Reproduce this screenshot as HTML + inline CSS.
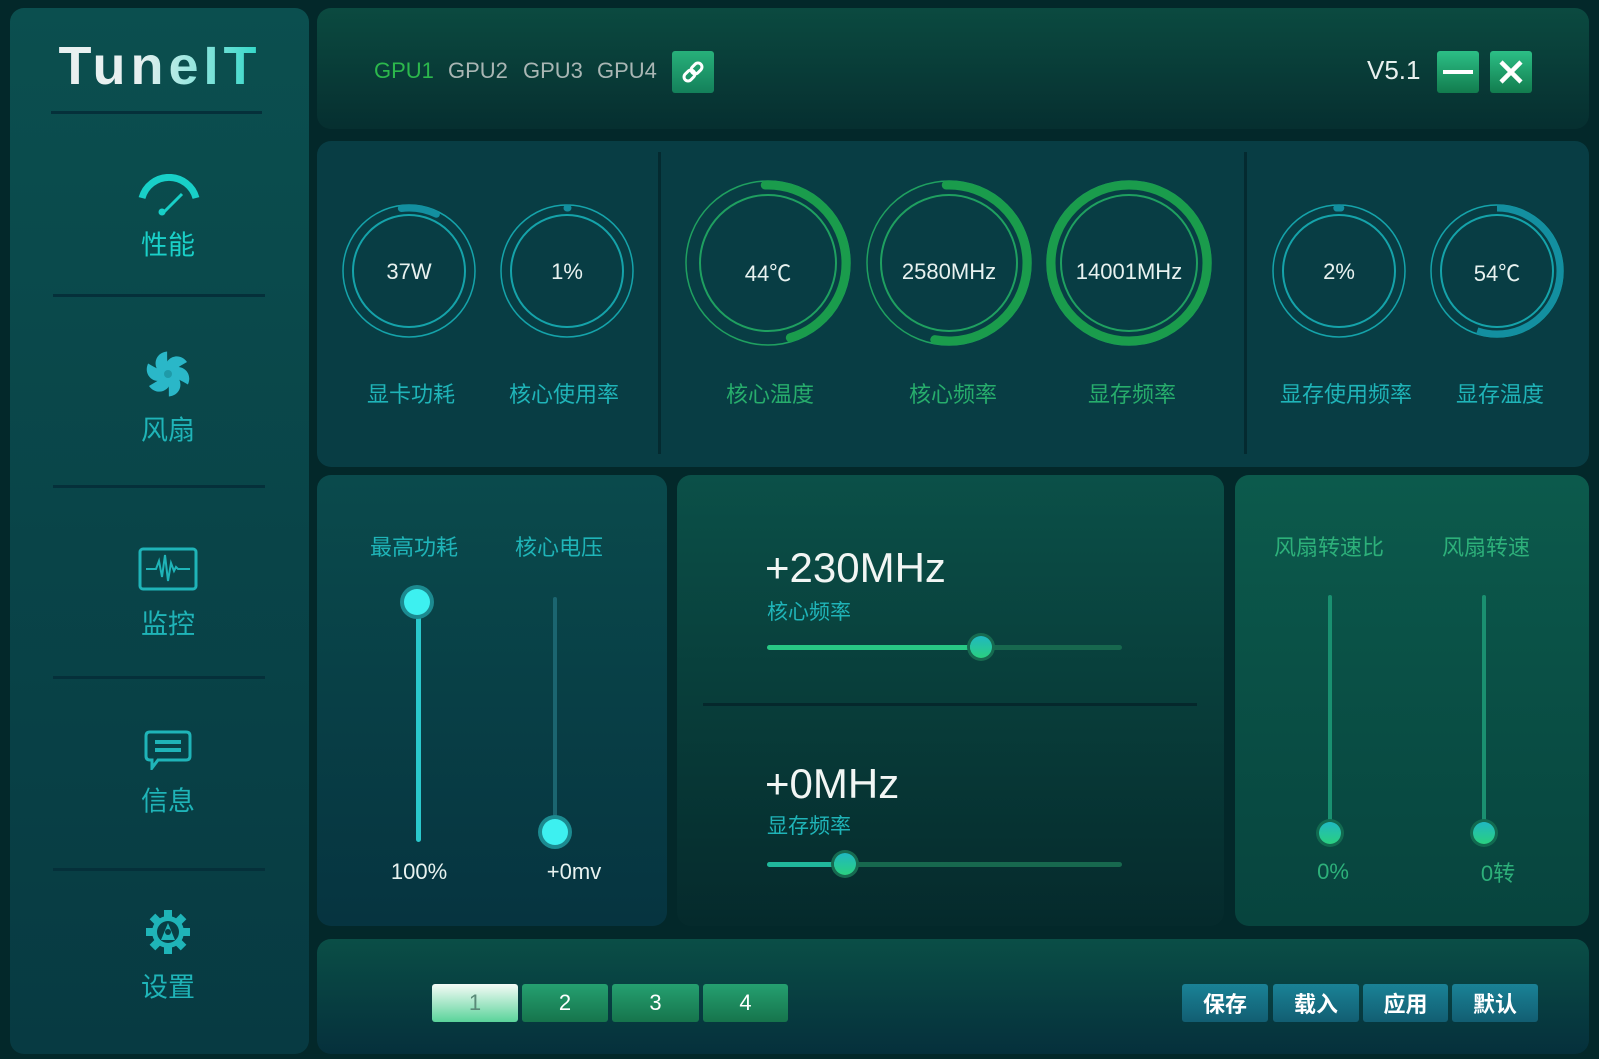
<!DOCTYPE html>
<html><head><meta charset="utf-8"><style>
*{margin:0;padding:0;box-sizing:border-box}
body{width:1599px;height:1059px;background:#03282a;position:relative;overflow:hidden;font-family:"Liberation Sans","Noto Sans CJK SC",sans-serif}
.a{position:absolute}
.p{position:absolute;border-radius:14px}
.t{position:absolute;white-space:nowrap;transform:translate(-50%,-50%)}
.sep{position:absolute;height:3px;background:#05303a;left:53px;width:212px}
.lbl{color:#1fb4b8;font-size:22px}
.lblg{color:#27ad6c;font-size:22px}
.val{color:#e8f2f0;font-size:22px}
.btn{position:absolute;top:984px;height:38px;border-radius:3px;color:#fff;font-size:22px;display:flex;align-items:center;justify-content:center}
.nb{background:linear-gradient(#25a070,#16744c)}
.rb{background:linear-gradient(#1a8296,#125e72);font-weight:bold}
</style></head><body>
<div class="p" style="left:10px;top:8px;width:299px;height:1046px;background:linear-gradient(#0b4f4f,#073a42)"></div>
<div class="t" style="left:160px;top:66px;font-size:54px;font-weight:bold;letter-spacing:5px;background:linear-gradient(90deg,#e8f0f0 40%,#2fd8c8);-webkit-background-clip:text;color:transparent">TuneIT</div>
<div class="sep" style="top:111px;left:51px;width:211px"></div>
<svg class="a" style="left:138px;top:174px" width="62" height="42" viewBox="0 0 62 42"><path d="M4 24 A28 28 0 0 1 58 24" fill="none" stroke="#18d0c8" stroke-width="7"/><path d="M24 40 L44 20" stroke="#18d0c8" stroke-width="3"/><circle cx="24" cy="38" r="3.5" fill="#18d0c8"/></svg>
<div class="t" style="left:168px;top:243px;color:#1ad0c8;font-size:27px">性能</div>
<div class="sep" style="top:294px"></div>
<svg class="a" style="left:145px;top:351px" width="46" height="46" viewBox="-23 -23 46 46"><g fill="#2ab7c8"><path id="b" d="M-3 -6 C-2 -18 12 -22 19 -12 C14 -9 8 -6 5 -2Z"/><use href="#b" transform="rotate(60)"/><use href="#b" transform="rotate(120)"/><use href="#b" transform="rotate(180)"/><use href="#b" transform="rotate(240)"/><use href="#b" transform="rotate(300)"/><circle r="7"/></g><circle r="4" fill="#1f9aa8"/></svg>
<div class="t" style="left:168px;top:428px;color:#1fb4b8;font-size:27px">风扇</div>
<div class="sep" style="top:485px"></div>
<svg class="a" style="left:138px;top:547px" width="60" height="44" viewBox="0 0 60 44"><rect x="2" y="2" width="56" height="40" rx="3" fill="none" stroke="#1fb4b8" stroke-width="3"/><path d="M8 22 H18 L21 14 L24 30 L27 8 L30 34 L33 16 L36 24 L38 20 L40 22 H52" fill="none" stroke="#1fb4b8" stroke-width="2"/></svg>
<div class="t" style="left:168px;top:622px;color:#1fb4b8;font-size:27px">监控</div>
<div class="sep" style="top:676px"></div>
<svg class="a" style="left:144px;top:730px" width="48" height="40" viewBox="0 0 48 40"><path d="M6 2 H42 Q46 2 46 6 V26 Q46 30 42 30 H14 L8 38 V30 H6 Q2 30 2 26 V6 Q2 2 6 2Z" fill="none" stroke="#1fb4b8" stroke-width="3"/><path d="M11 12 H37 M11 20 H37" stroke="#1fb4b8" stroke-width="4"/></svg>
<div class="t" style="left:168px;top:799px;color:#1fb4b8;font-size:27px">信息</div>
<div class="sep" style="top:868px"></div>
<svg class="a" style="left:145px;top:909px" width="46" height="46" viewBox="-23 -23 46 46"><g fill="#1fb4b8"><circle r="16"/><g id="tt"><rect x="-4" y="-22" width="8" height="8"/></g><use href="#tt" transform="rotate(45)"/><use href="#tt" transform="rotate(90)"/><use href="#tt" transform="rotate(135)"/><use href="#tt" transform="rotate(180)"/><use href="#tt" transform="rotate(225)"/><use href="#tt" transform="rotate(270)"/><use href="#tt" transform="rotate(315)"/></g><circle r="11" fill="#083f45"/><path d="M0 -9 L-7 8 H7Z" fill="#1fb4b8"/><circle r="3" fill="#083f45"/></svg>
<div class="t" style="left:168px;top:985px;color:#1fb4b8;font-size:27px">设置</div>

<div class="p" style="left:317px;top:8px;width:1272px;height:121px;background:linear-gradient(#0b4a40,#062f30)"></div>
<div class="a" style="left:374px;top:58px;font-size:22px;color:#2cb84c">GPU1</div>
<div class="a" style="left:448px;top:58px;font-size:22px;color:#a9b6b4">GPU2</div>
<div class="a" style="left:523px;top:58px;font-size:22px;color:#a9b6b4">GPU3</div>
<div class="a" style="left:597px;top:58px;font-size:22px;color:#a9b6b4">GPU4</div>
<div class="a" style="left:672px;top:51px;width:42px;height:42px;border-radius:3px;background:linear-gradient(#27b07a,#14805a)"><svg width="42" height="42" viewBox="0 0 42 42"><g transform="rotate(-45 21 21)" fill="none" stroke="#fff" stroke-width="3"><rect x="10" y="17" width="12" height="8" rx="4"/><rect x="20" y="17" width="12" height="8" rx="4"/></g></svg></div>
<div class="a" style="left:1367px;top:55px;font-size:26px;color:#e8f0ee">V5.1</div>
<div class="a" style="left:1437px;top:51px;width:42px;height:42px;border-radius:3px;background:linear-gradient(#2cbf86,#127c4e)"><div class="a" style="left:6px;top:19px;width:30px;height:4px;background:#fff"></div></div>
<div class="a" style="left:1490px;top:51px;width:42px;height:42px;border-radius:3px;background:linear-gradient(#2cbf86,#127c4e)"><svg width="42" height="42"><path d="M11 11 L31 31 M31 11 L11 31" stroke="#fff" stroke-width="4.5"/></svg></div>

<div class="p" style="left:317px;top:141px;width:1272px;height:326px;background:#083d44"></div>
<div class="a" style="left:658px;top:152px;width:3px;height:302px;background:#042a30"></div>
<div class="a" style="left:1244px;top:152px;width:3px;height:302px;background:#042a30"></div>
<svg class="a" style="left:0;top:0" width="1599" height="480">
<g fill="none" stroke="#15a3aa">
<circle cx="409" cy="271" r="66" stroke-width="1.5"/><circle cx="409" cy="271" r="56" stroke-width="2"/>
<circle cx="567" cy="271" r="66" stroke-width="1.5"/><circle cx="567" cy="271" r="56" stroke-width="2"/>
<circle cx="1339" cy="271" r="66" stroke-width="1.5"/><circle cx="1339" cy="271" r="56" stroke-width="2"/>
<circle cx="1497" cy="271" r="66" stroke-width="1.5"/><circle cx="1497" cy="271" r="56" stroke-width="2"/>
</g>
<g fill="none" stroke="#138fa0" stroke-width="7" stroke-linecap="round">
<circle cx="409" cy="271" r="63" stroke-dasharray="36 400" transform="rotate(-97 409 271)"/>
<circle cx="567" cy="271" r="63" stroke-dasharray="1 400" transform="rotate(-90 567 271)"/>
<circle cx="1339" cy="271" r="63" stroke-dasharray="4 400" transform="rotate(-92 1339 271)"/>
<circle cx="1497" cy="271" r="63" stroke-dasharray="218 400" transform="rotate(-90 1497 271)" stroke-linecap="butt"/>
</g>
<g fill="none" stroke="#1fa060">
<circle cx="768" cy="263" r="82" stroke-width="1.5"/><circle cx="768" cy="263" r="68" stroke-width="2"/>
<circle cx="949" cy="263" r="82" stroke-width="1.5"/><circle cx="949" cy="263" r="68" stroke-width="2"/>
<circle cx="1129" cy="263" r="82" stroke-width="1.5"/><circle cx="1129" cy="263" r="68" stroke-width="2"/>
</g>
<g fill="none" stroke="#1a9c4c" stroke-width="9" stroke-linecap="round">
<circle cx="768" cy="263" r="78" stroke-dasharray="225 500" transform="rotate(-92 768 263)"/>
<circle cx="949" cy="263" r="78" stroke-dasharray="262 500" transform="rotate(-92 949 263)"/>
<circle cx="1129" cy="263" r="78" stroke-dasharray="500 500"/>
</g>
</svg>
<div class="t val" style="left:409px;top:272px">37W</div>
<div class="t val" style="left:567px;top:272px">1%</div>
<div class="t val" style="left:768px;top:272px">44℃</div>
<div class="t val" style="left:949px;top:272px">2580MHz</div>
<div class="t val" style="left:1129px;top:272px">14001MHz</div>
<div class="t val" style="left:1339px;top:272px">2%</div>
<div class="t val" style="left:1497px;top:272px">54℃</div>
<div class="t lbl" style="left:411px;top:393px">显卡功耗</div>
<div class="t lbl" style="left:564px;top:393px">核心使用率</div>
<div class="t lblg" style="left:770px;top:393px">核心温度</div>
<div class="t lblg" style="left:953px;top:393px">核心频率</div>
<div class="t lblg" style="left:1132px;top:393px">显存频率</div>
<div class="t lbl" style="left:1346px;top:393px">显存使用频率</div>
<div class="t lbl" style="left:1500px;top:393px">显存温度</div>

<div class="p" style="left:317px;top:475px;width:350px;height:451px;background:linear-gradient(#0a4a4c,#063440)"></div>
<div class="t lbl" style="left:414px;top:546px">最高功耗</div>
<div class="t lbl" style="left:559px;top:546px">核心电压</div>
<div class="a" style="left:416px;top:602px;width:5px;height:240px;border-radius:3px;background:#2ac8cc"></div>
<div class="a" style="left:404px;top:589px;width:26px;height:26px;border-radius:50%;background:#3df0f0;box-shadow:0 0 0 4px #1c8a90"></div>
<div class="a" style="left:553px;top:597px;width:4px;height:234px;border-radius:2px;background:#1b6570"></div>
<div class="a" style="left:542px;top:819px;width:26px;height:26px;border-radius:50%;background:#3df0f0;box-shadow:0 0 0 4px #1c8a90"></div>
<div class="t val" style="left:419px;top:872px">100%</div>
<div class="t val" style="left:574px;top:872px">+0mv</div>

<div class="p" style="left:677px;top:475px;width:547px;height:451px;background:linear-gradient(#0b5048,#052a2c)"></div>
<div class="a" style="left:765px;top:544px;font-size:42px;color:#f2f6f4">+230MHz</div>
<div class="a" style="left:767px;top:596px;font-size:21px;color:#1fb4b8">核心频率</div>
<div class="a" style="left:767px;top:645px;width:355px;height:5px;border-radius:3px;background:#17684e"></div>
<div class="a" style="left:767px;top:645px;width:214px;height:5px;border-radius:3px;background:#28c884"></div>
<div class="a" style="left:970px;top:636px;width:22px;height:22px;border-radius:50%;background:linear-gradient(#20b8c0,#2ad080);box-shadow:0 0 0 3px #176a50"></div>
<div class="a" style="left:703px;top:703px;width:494px;height:3px;background:#05282c"></div>
<div class="a" style="left:765px;top:760px;font-size:42px;color:#f2f6f4">+0MHz</div>
<div class="a" style="left:767px;top:810px;font-size:21px;color:#1fb4b8">显存频率</div>
<div class="a" style="left:767px;top:862px;width:355px;height:5px;border-radius:3px;background:#17684e"></div>
<div class="a" style="left:767px;top:862px;width:78px;height:5px;border-radius:3px;background:#20b89c"></div>
<div class="a" style="left:834px;top:853px;width:22px;height:22px;border-radius:50%;background:linear-gradient(#20b8c0,#2ad080);box-shadow:0 0 0 3px #176a50"></div>

<div class="p" style="left:1235px;top:475px;width:354px;height:451px;background:linear-gradient(#0c5a4c,#07443e)"></div>
<div class="t lblg" style="left:1329px;top:546px;color:#2db07a">风扇转速比</div>
<div class="t lblg" style="left:1486px;top:546px;color:#2db07a">风扇转速</div>
<div class="a" style="left:1328px;top:595px;width:4px;height:237px;background:#1a9070;border-radius:2px"></div>
<div class="a" style="left:1482px;top:595px;width:4px;height:237px;background:#1a9070;border-radius:2px"></div>
<div class="a" style="left:1319px;top:822px;width:22px;height:22px;border-radius:50%;background:linear-gradient(#20b8c0,#2ad080);box-shadow:0 0 0 3px #126a50"></div>
<div class="a" style="left:1473px;top:822px;width:22px;height:22px;border-radius:50%;background:linear-gradient(#20b8c0,#2ad080);box-shadow:0 0 0 3px #126a50"></div>
<div class="t lblg" style="left:1333px;top:872px;color:#2db07a">0%</div>
<div class="t lblg" style="left:1498px;top:872px;color:#2db07a">0转</div>

<div class="p" style="left:317px;top:939px;width:1272px;height:115px;background:linear-gradient(#0a4e46,#05303c)"></div>
<div class="btn" style="left:432px;width:86px;background:linear-gradient(#f4fbf6,#5ad39a);color:#5a8a78">1</div>
<div class="btn nb" style="left:522px;width:86px">2</div>
<div class="btn nb" style="left:612px;width:87px">3</div>
<div class="btn nb" style="left:703px;width:85px">4</div>
<div class="btn rb" style="left:1182px;width:86px">保存</div>
<div class="btn rb" style="left:1273px;width:86px">载入</div>
<div class="btn rb" style="left:1363px;width:85px">应用</div>
<div class="btn rb" style="left:1452px;width:86px">默认</div>
</body></html>
